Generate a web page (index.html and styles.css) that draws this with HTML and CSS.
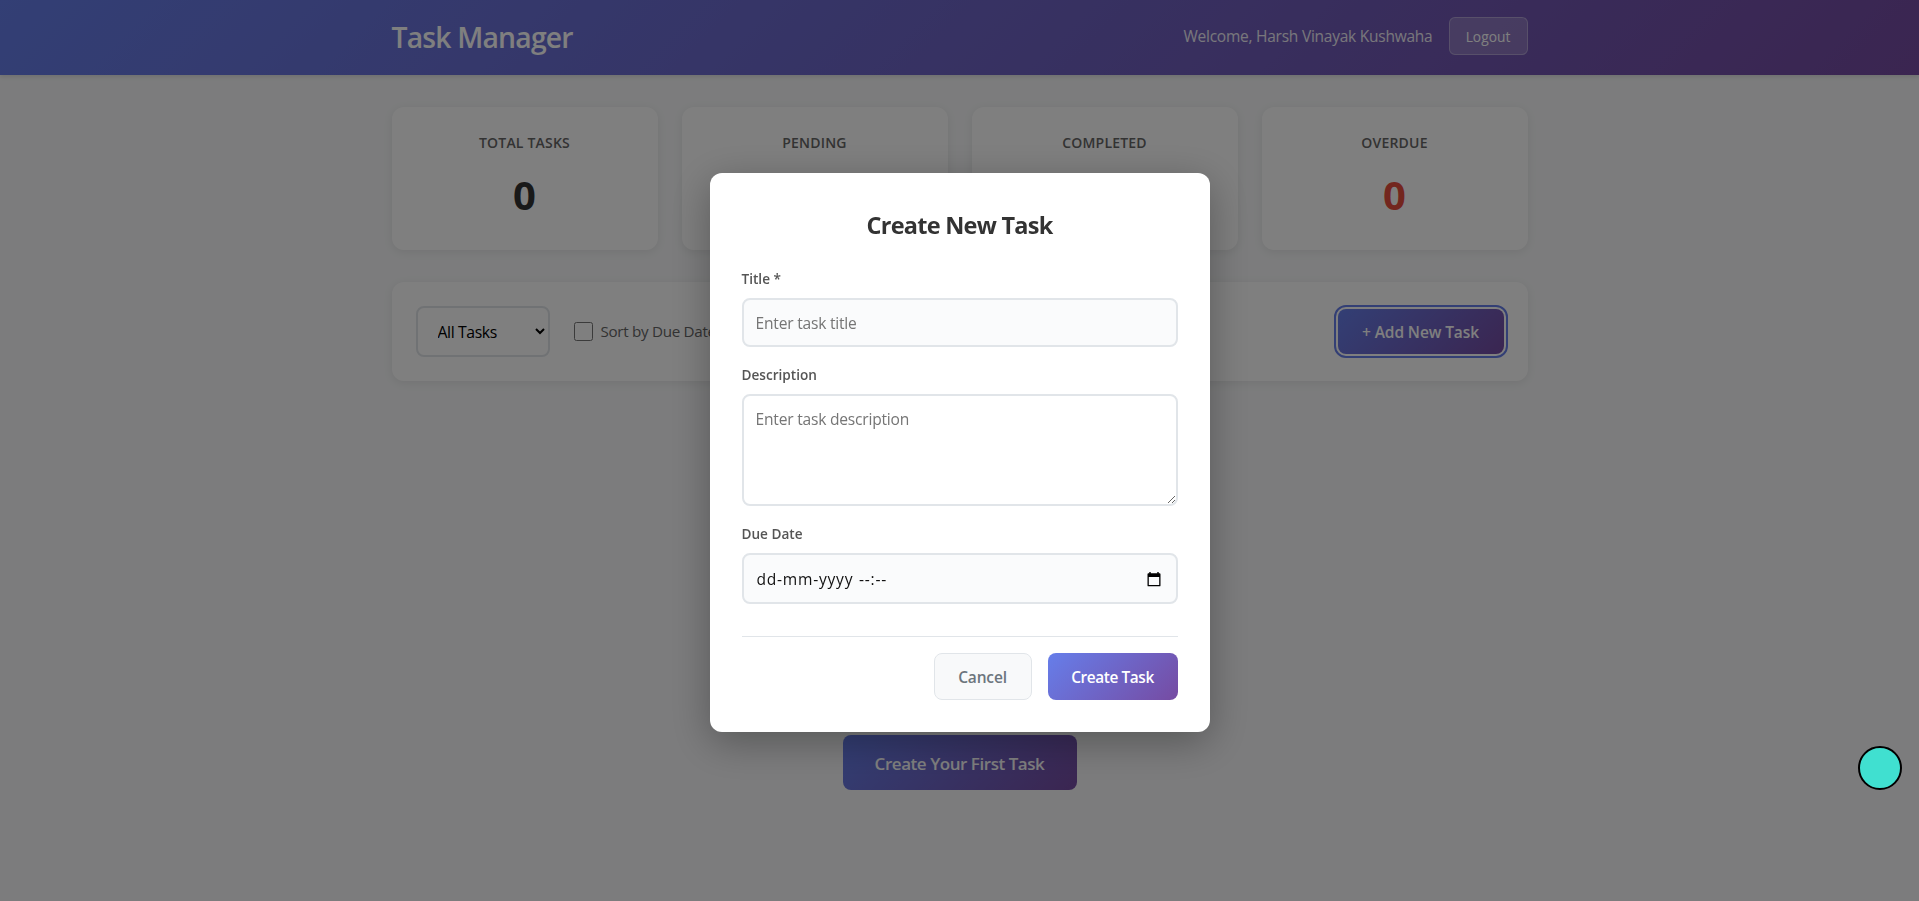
FILE: index.html
```html
<!DOCTYPE html>
<html lang="en">
<head>
<meta charset="utf-8">
<title>Task Manager</title>
<link rel="stylesheet" href="styles.css">
</head>
<body>
<div class="page">
  <header class="header">
    <div class="header-inner">
      <h1 class="brand">Task Manager</h1>
      <div class="user">
        <span class="welcome">Welcome, Harsh Vinayak Kushwaha</span>
        <button class="logout"><span>Logout</span></button>
      </div>
    </div>
  </header>
  <main class="main">
    <section class="stats">
      <div class="card stat"><h3 class="stat-label">Total Tasks</h3><p class="stat-value">0</p></div>
      <div class="card stat"><h3 class="stat-label">Pending</h3><p class="stat-value">0</p></div>
      <div class="card stat"><h3 class="stat-label">Completed</h3><p class="stat-value">0</p></div>
      <div class="card stat"><h3 class="stat-label">Overdue</h3><p class="stat-value overdue">0</p></div>
    </section>
    <section class="card toolbar">
      <div class="filters">
        <select class="filter"><option>All Tasks</option></select>
        <label class="sort"><input class="check" type="checkbox"><span>Sort by Due Date</span></label>
      </div>
      <button class="primary add"><span>+ Add New Task</span></button>
    </section>
    <section class="empty">
      <button class="primary first"><span>Create Your First Task</span></button>
    </section>
  </main>
</div>
<div class="overlay">
  <form class="modal">
    <h2 class="modal-title"><span>Create New Task</span></h2>
    <div class="field">
      <label class="label" for="title">Title *</label>
      <input class="control" id="title" type="text" placeholder="Enter task title">
    </div>
    <div class="field">
      <label class="label" for="desc">Description</label>
      <textarea class="control area" id="desc" placeholder="Enter task description"></textarea>
    </div>
    <div class="field">
      <label class="label">Due Date</label>
      <div class="control date">
        <span class="date-text">dd-mm-yyyy --:--</span>
        <svg class="calendar" viewBox="0 0 14 15" width="14" height="15"><path fill="#000" fill-rule="evenodd" d="M2.300 0h1.400v1.300h6.600V0h1.400v1.300h.900a.9.9 0 0 1 .9.9v11.200a.9.9 0 0 1-.9.9H1.400a.9.9 0 0 1-.9-.9V2.200a.9.9 0 0 1 .9-.9h.900zM1.800 5v8.100h10.400V5z"/></svg>
      </div>
    </div>
    <div class="actions">
      <button class="cancel" type="button"><span>Cancel</span></button>
      <button class="primary create" type="button"><span>Create Task</span></button>
    </div>
  </form>
</div>
<div class="bubble"></div>
</body>
</html>
```
FILE: styles.css
```css
* { box-sizing: border-box; margin: 0; padding: 0; }
body {
  font-family: "Open Sans", "Noto Sans", sans-serif;
  background: #f8f9fa;
  color: #333;
  height: 901px;
  overflow: hidden;
}
button, input, select, textarea { font-family: inherit; }
button { display: flex; align-items: center; justify-content: center; white-space: nowrap; }
.header {
  height: 75px;
  background: linear-gradient(135deg, #667eea 0%, #764ba2 100%);
  box-shadow: 0 2px 4px rgba(0, 0, 0, .1);
  color: #fff;
}
.header-inner {
  max-width: 1200px;
  height: 100%;
  margin: 0 auto;
  padding: 0 32px;
  display: flex;
  align-items: center;
  justify-content: space-between;
}
.brand { padding-bottom: 2px; font-size: 28.300px; font-weight: 600; letter-spacing: -.8px; }
.user { display: flex; align-items: center; gap: 16px; padding-bottom: 3px; }
.welcome { font-size: 15.500px; font-weight: 500; opacity: .9; letter-spacing: -.24px; }
.logout {
  width: 79px;
  height: 38px;
  border: 1px solid rgba(255, 255, 255, .3);
  border-radius: 6px;
  background: rgba(255, 255, 255, .2);
  color: #fff;
  font-size: 13.800px;
}
.main { max-width: 1200px; margin: 0 auto; padding: 32px; }
.card {
  background: #fff;
  border-radius: 12px;
  box-shadow: 0 2px 10px rgba(0, 0, 0, .08);
}
.stats { display: grid; grid-template-columns: repeat(4, 1fr); gap: 24px; margin-bottom: 32px; }
.stat { height: 143px; padding-top: 26px; text-align: center; }
.stat-label {
  color: #666;
  font-size: 14px;
  line-height: 20px;
  font-weight: 600;
  letter-spacing: .2px;
  text-transform: uppercase;
}
.stat-value { margin-top: 15px; font-size: 40px; line-height: 54px; font-weight: 700; }
.overdue { color: #e74c3c; }
.toolbar {
  height: 99px;
  padding: 0 24px;
  display: flex;
  align-items: center;
  justify-content: space-between;
}
.filters { display: flex; align-items: center; gap: 24px; }
.filter {
  width: 134px;
  height: 51px;
  padding: 0 16px;
  border: 2px solid #e1e5e9;
  border-radius: 8px;
  background: #fff;
  color: #000;
  font-size: 15.800px;
  letter-spacing: -.4px;
}
.sort { display: flex; align-items: center; gap: 8px; color: #666; font-size: 15.200px; letter-spacing: -.3px; }
.sort span { padding-bottom: 1px; }
.check { width: 19px; height: 19px; }
.primary {
  border: 0;
  border-radius: 8px;
  background: linear-gradient(135deg, #667eea 0%, #764ba2 100%);
  color: #fff;
  font-weight: 600;
}
.add { width: 166px; height: 45px; font-size: 15.500px; letter-spacing: -.1px; outline: 2px solid #667eea; outline-offset: 2px; }
.empty { display: flex; justify-content: center; margin-top: 354px; }
.first { width: 234px; height: 55px; padding-top: 1px; font-size: 17px; letter-spacing: -.45px; }
.overlay {
  position: fixed;
  inset: 0;
  display: flex;
  align-items: center;
  justify-content: center;
  padding-top: 4px;
  background: rgba(0, 0, 0, .5);
}
.modal {
  width: 500px;
  height: 559px;
  padding: 32px;
  border-radius: 12px;
  background: #fff;
  box-shadow: 0 10px 40px rgba(0, 0, 0, .3);
}
.modal-title { height: 42px; margin-bottom: 19px; text-align: center; font-size: 23.500px; line-height: 40px; font-weight: 700; letter-spacing: -.75px; }
.field { margin-bottom: 15px; }
.label { display: block; height: 24px; margin-bottom: 8px; color: #555; font-size: 13.600px; line-height: 25px; font-weight: 600; }
.control {
  display: block;
  width: 100%;
  height: 49px;
  padding: 12px;
  border: 2px solid #e1e5e9;
  border-radius: 8px;
  background: #fafbfc;
  font-size: 15.600px;
  letter-spacing: -.22px;
  outline: 0;
}
.control::placeholder { color: #757575; }
.area { height: 112px; background: #fff; line-height: 23px; resize: vertical; }
.date { height: 51px; display: flex; align-items: center; justify-content: space-between; padding-right: 15px; color: #111; }
.date-text { padding-left: 1px; letter-spacing: .75px; word-spacing: 1px; }
.calendar { margin-top: 1px; }
.actions { display: flex; justify-content: flex-end; gap: 16px; margin-top: 32px; padding-top: 16px; border-top: 1px solid #e1e5e9; }
.cancel { width: 98px; height: 47px; border: 1px solid #e1e5e9; border-radius: 8px; background: #f8f9fa; color: #6c757d; font-size: 15.500px; letter-spacing: -.15px; font-weight: 600; }
.create { width: 130px; height: 47px; padding-top: 1px; font-size: 15.400px; letter-spacing: -.4px; }
.bubble {
  position: fixed;
  left: 1858px;
  top: 746px;
  width: 44px;
  height: 44px;
  border: 2px solid #000;
  border-radius: 50%;
  background: #40e0d0;
}
```
